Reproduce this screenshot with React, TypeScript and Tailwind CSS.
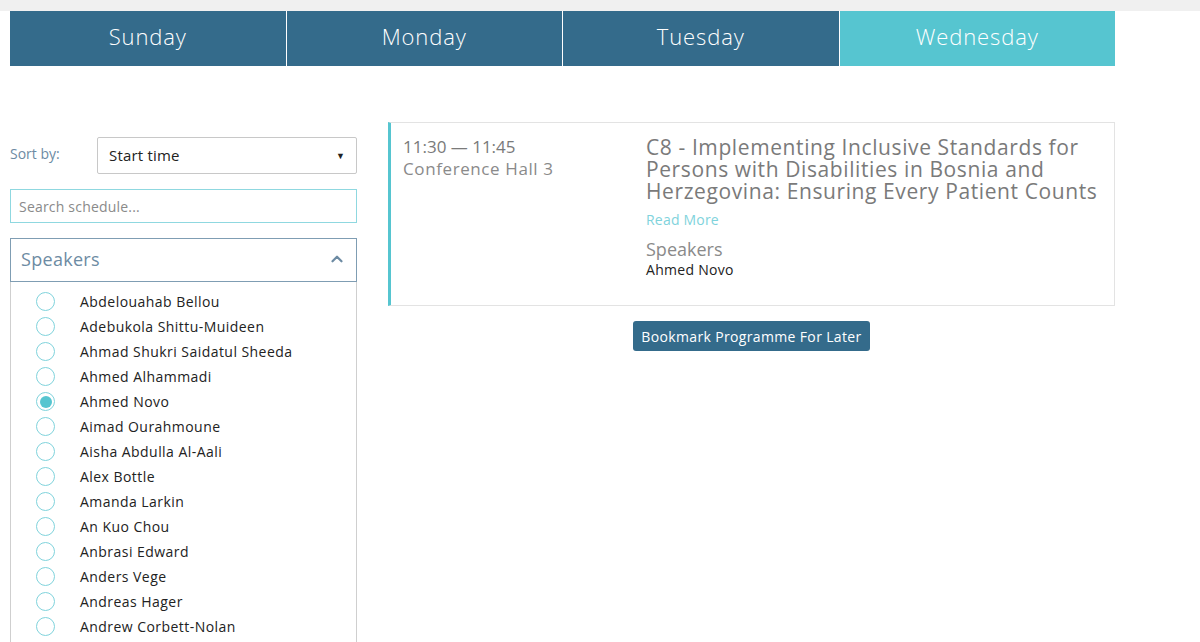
import { ChevronUp } from 'lucide-react';

const days = ['Sunday', 'Monday', 'Tuesday', 'Wednesday'];

const speakers = [
  'Abdelouahab Bellou',
  'Adebukola Shittu-Muideen',
  'Ahmad Shukri Saidatul Sheeda',
  'Ahmed Alhammadi',
  'Ahmed Novo',
  'Aimad Ourahmoune',
  'Aisha Abdulla Al-Aali',
  'Alex Bottle',
  'Amanda Larkin',
  'An Kuo Chou',
  'Anbrasi Edward',
  'Anders Vege',
  'Andreas Hager',
  'Andrew Corbett-Nolan',
];

function Radio({ checked }: { checked: boolean }) {
  return (
    <span className="flex h-[19px] w-[19px] items-center justify-center rounded-full border-[1.5px] border-[#7fd3dc] bg-white">
      {checked && <span className="h-[12px] w-[12px] rounded-full bg-[#56c5d0]" />}
    </span>
  );
}

export default function App() {
  return (
    <div className="min-h-screen bg-white font-['Open_Sans',sans-serif]">
      {/* top strip */}
      <div className="h-[11px] bg-[#f0f0f0]" />

      <div className="w-[1105px] ml-[10px]">
        {/* Day tabs */}
        <div className="flex h-[55px] gap-px">
          {days.map((d) => (
            <button
              key={d}
              className={
                d === 'Wednesday'
                  ? 'flex-1 bg-[#56c5d0] pb-[5px] text-[22px] font-light tracking-[0.9px] text-white'
                  : 'flex-1 bg-[#346b8b] pb-[5px] text-[22px] font-light tracking-[0.9px] text-white'
              }
            >
              {d}
            </button>
          ))}
        </div>

        <div className="mt-[56px] flex gap-[31px]">
          {/* Filters */}
          <aside className="w-[347px] shrink-0 pt-[15px]">
            <div className="flex items-center">
              <span className="-mt-[5px] w-[87px] text-[14px] text-[#6d8ba3]">Sort by:</span>
              <div className="flex h-[37px] flex-1 items-center justify-between rounded-[2px] border border-[#c8c8c8] px-[11px]">
                <span className="text-[15px] tracking-[0.2px] text-[#222]">Start time</span>
                <span className="text-[9px] text-[#222]">▼</span>
              </div>
            </div>

            <div className="mt-[15px] flex h-[34px] items-center border border-[#8fd8e0] px-[8px] text-[14px] tracking-[0.2px] text-[#8a8a8a]">
              Search schedule...
            </div>

            <div className="mt-[15px] flex h-[44px] items-center justify-between border border-[#7f9db3] pb-[2px] px-[10px]">
              <span className="text-[18px] tracking-[0.3px] text-[#6d8ba3]">Speakers</span>
              <ChevronUp size={18} strokeWidth={3} className="text-[#6d8ba3]" />
            </div>

            <ul className="border-x border-[#cfcfcf] pb-[20px] pt-[7px]">
              {speakers.map((s) => (
                <li key={s} className="flex h-[25px] items-center">
                  <span className="ml-[25px] mr-[25px]">
                    <Radio checked={s === 'Ahmed Novo'} />
                  </span>
                  <span className="text-[14px] tracking-[0.45px] text-[#222]">{s}</span>
                </li>
              ))}
            </ul>
          </aside>

          {/* Schedule */}
          <main className="flex-1">
            <div className="grid grid-cols-[243px_1fr] border border-l-[3px] border-[#e3e3e3] border-l-[#56c5d0] pb-[25px] pl-[12px] pr-[4px] pt-[13px]">
              <div>
                <div className="text-[17px] leading-[22px] text-[#7a7a7a]">11:30 — 11:45</div>
                <div className="text-[17px] leading-[22px] tracking-[0.6px] text-[#8a8a8a]">Conference Hall 3</div>
              </div>
              <div>
                <h3 className="text-[21px] leading-[22px] tracking-[0.6px] text-[#7a7a7a]">
                  C8 - Implementing Inclusive Standards for Persons with Disabilities in Bosnia and Herzegovina: Ensuring Every Patient Counts
                </h3>
                <a className="mt-[7px] block text-[14px] tracking-[0.2px] text-[#7fd3dc]">Read More</a>
                <div className="mt-[9px] text-[18px] leading-[20px] text-[#8a8a8a]">Speakers</div>
                <div className="text-[14px] tracking-[0.3px] text-[#222]">Ahmed Novo</div>
              </div>
            </div>

            <div className="mt-[15px] flex justify-center">
              <button className="h-[30px] rounded-[3px] bg-[#346b8b] px-[8px] text-[14px] tracking-[0.35px] text-white">
                Bookmark Programme For Later
              </button>
            </div>
          </main>
        </div>
      </div>
    </div>
  );
}
